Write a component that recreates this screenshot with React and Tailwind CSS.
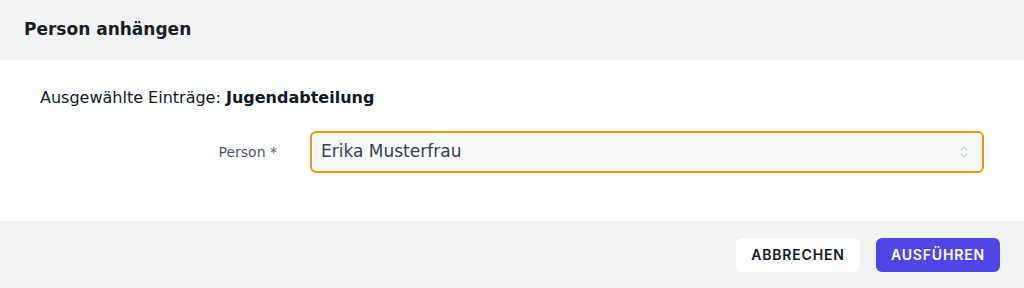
const App = () => {
    return (
        <div className="w-[1024px] h-[288px] bg-white flex flex-col font-['DejaVu_Sans',sans-serif]">
            {/* Header */}
            <div className="h-[60px] bg-[#f2f3f5] flex items-center px-6">
                <h2 className="text-[17px] font-bold text-[#1a1d24]">Person anhängen</h2>
            </div>

            {/* Body */}
            <div className="h-[161px] px-10 pt-[26px]">
                <p className="text-[16px] text-[#111827]">
                    Ausgewählte Einträge: <span className="font-bold">Jugendabteilung</span>
                </p>
                <div className="flex items-center mt-[21px]">
                    <label className="w-[270px] pr-[33px] text-right text-[14px] text-[#4b5563]">Person *</label>
                    <div className="relative w-[674px] h-[42px] rounded-md border-2 border-[#e59a0b] bg-[#f8f9fb] flex items-center pl-[9px]">
                        <span className="text-[17px] text-[#374151]">Erika Musterfrau</span>
                        <svg className="absolute right-[12px] top-1/2 -translate-y-1/2" width="12" height="18" viewBox="0 0 12 18" fill="none" stroke="#c7cbd3" strokeWidth="1.3" strokeLinecap="round" strokeLinejoin="round">
                            <path d="M3 7 L6 4 L9 7" />
                            <path d="M3 11 L6 14 L9 11" />
                        </svg>
                    </div>
                </div>
            </div>

            {/* Footer */}
            <div className="flex-1 bg-[#f2f3f5] flex items-center justify-end gap-4 pr-6 font-['Inter',sans-serif]">
                <button className="w-[124px] h-[34px] bg-white rounded-md text-[14px] font-semibold tracking-[0.06em] text-[#111827]">
                    ABBRECHEN
                </button>
                <button className="w-[124px] h-[34px] bg-[#5046e5] rounded-md text-[14px] font-semibold tracking-[0.06em] text-white">
                    AUSFÜHREN
                </button>
            </div>
        </div>
    );
};

export default App;
